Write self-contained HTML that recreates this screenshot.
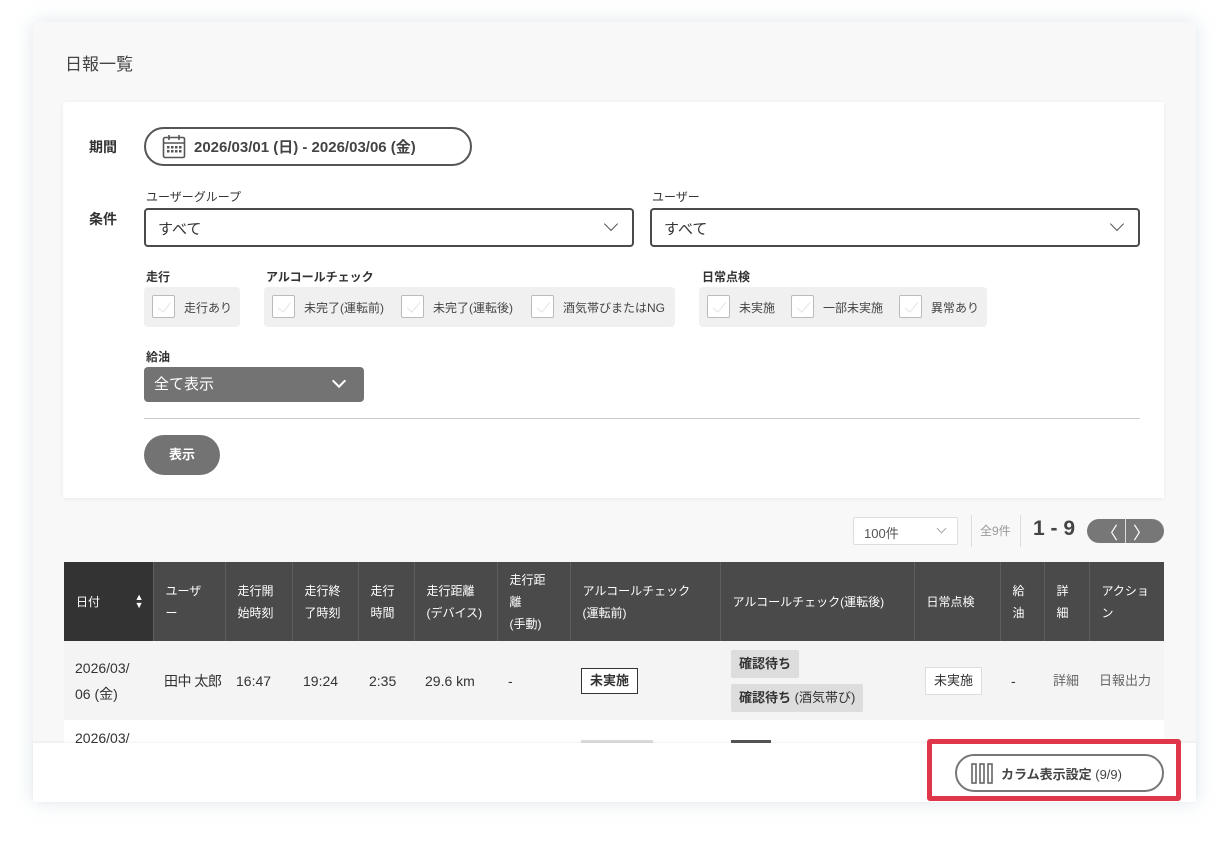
<!DOCTYPE html>
<html><head><meta charset="utf-8">
<style>
*{box-sizing:border-box;margin:0;padding:0}
body{width:1228px;height:844px;background:#fff;font-family:"Liberation Sans","Noto Sans CJK JP",sans-serif;color:#333;position:relative;overflow:hidden}
.a{position:absolute}
.card{left:33px;top:22px;width:1163px;height:780px;background:#f8f8f8;box-shadow:0 0 18px rgba(160,190,200,.35);overflow:hidden}
.panel{left:63px;top:102px;width:1101px;height:396px;background:#fff;box-shadow:0 1px 4px rgba(0,0,0,.06)}
.lbl{font-size:14px;font-weight:bold;color:#333}
.sm{font-size:12px;color:#333}
.sel{border:2px solid #4a4a4a;border-radius:4px;height:39px;background:#fff;font-size:15px;padding:8px 12px}
.chev{position:absolute;width:10px;height:10px;border-right:1.6px solid #555;border-bottom:1.6px solid #555;transform:rotate(45deg)}
.grp{background:#f0f0f0;border-radius:4px;height:40px}
.cb{position:absolute;width:23px;height:23px;border:1px solid #bbb;background:#fff;top:8px;border-radius:2px}
.cb::after{content:"";position:absolute;left:8px;top:3px;width:6px;height:12px;border-right:1px solid #e4e4e4;border-bottom:1px solid #e4e4e4;transform:rotate(40deg)}
.cbt{position:absolute;top:12px;font-size:12px;color:#444;white-space:nowrap}
th,td{font-weight:normal;text-align:left}
.tbl{left:64px;top:562px;width:1100px;border-collapse:collapse;table-layout:fixed}
.tbl th{background:#4a4a4a;color:#fff;font-size:12px;line-height:22px;height:79px;padding:0 12px;border-left:1px solid #5e5e5e;vertical-align:middle}
.tbl td{background:#f4f4f4;font-size:14px;height:79px;padding:0 11px;line-height:26px;color:#333;white-space:nowrap;overflow:visible}
.badge{display:inline-block;background:#ddd;font-size:13px;font-weight:bold;padding:0 8px;line-height:28px;border-radius:2px}
</style></head><body>
<div class="a card"></div>
<div class="a" style="left:65px;top:50px;font-size:17px;color:#444">日報一覧</div>
<div class="a panel"></div>
<div class="a lbl" style="left:89px;top:137px">期間</div>
<div class="a" style="left:144px;top:127px;width:328px;height:39px;border:2px solid #555;border-radius:20px;background:#fff"></div>
<svg class="a" style="left:162px;top:134px" width="24" height="25" viewBox="0 0 24 25"><rect x="1.5" y="3.5" width="21" height="20" rx="1.5" fill="none" stroke="#555" stroke-width="1.6"/><line x1="1.5" y1="9" x2="22.5" y2="9" stroke="#555" stroke-width="1.4"/><line x1="7" y1="1" x2="7" y2="6" stroke="#555" stroke-width="1.6"/><line x1="17" y1="1" x2="17" y2="6" stroke="#555" stroke-width="1.6"/><g fill="#555"><rect x="5" y="12" width="2.5" height="2.5"/><rect x="9" y="12" width="2.5" height="2.5"/><rect x="13" y="12" width="2.5" height="2.5"/><rect x="17" y="12" width="2.5" height="2.5"/><rect x="5" y="16" width="2.5" height="2.5"/><rect x="9" y="16" width="2.5" height="2.5"/><rect x="13" y="16" width="2.5" height="2.5"/><rect x="17" y="16" width="2.5" height="2.5"/></g></svg>
<div class="a" style="left:194px;top:136px;font-size:15px;font-weight:bold;color:#444">2026/03/01 (日) - 2026/03/06 (金)</div>
<div class="a lbl" style="left:89px;top:209px">条件</div>
<div class="a sm" style="left:146px;top:188px">ユーザーグループ</div>
<div class="a sel" style="left:144px;top:208px;width:490px">すべて<span class="chev" style="right:16px;top:9px"></span></div>
<div class="a sm" style="left:652px;top:188px">ユーザー</div>
<div class="a sel" style="left:650px;top:208px;width:490px">すべて<span class="chev" style="right:16px;top:9px"></span></div>

<div class="a sm" style="left:146px;top:268px;font-weight:bold">走行</div>
<div class="a grp" style="left:144px;top:287px;width:96px"><span class="cb" style="left:8px"></span><span class="cbt" style="left:40px">走行あり</span></div>
<div class="a sm" style="left:266px;top:268px;font-weight:bold">アルコールチェック</div>
<div class="a grp" style="left:264px;top:287px;width:411px"><span class="cb" style="left:8px"></span><span class="cbt" style="left:40px">未完了(運転前)</span><span class="cb" style="left:137px"></span><span class="cbt" style="left:169px">未完了(運転後)</span><span class="cb" style="left:267px"></span><span class="cbt" style="left:299px">酒気帯びまたはNG</span></div>
<div class="a sm" style="left:702px;top:268px;font-weight:bold">日常点検</div>
<div class="a grp" style="left:699px;top:287px;width:288px"><span class="cb" style="left:8px"></span><span class="cbt" style="left:40px">未実施</span><span class="cb" style="left:92px"></span><span class="cbt" style="left:124px">一部未実施</span><span class="cb" style="left:200px"></span><span class="cbt" style="left:232px">異常あり</span></div>

<div class="a sm" style="left:146px;top:348px;font-weight:bold">給油</div>
<div class="a" style="left:144px;top:367px;width:220px;height:35px;background:#737373;border-radius:4px;color:#fff;font-size:15px;padding:6px 10px">全て表示<span class="chev" style="right:20px;top:9px;border-color:#fff;border-width:2px"></span></div>
<div class="a" style="left:144px;top:418px;width:996px;height:1px;background:#ccc"></div>
<div class="a" style="left:144px;top:435px;width:76px;height:40px;background:#737373;border-radius:20px;color:#fff;font-size:13px;font-weight:bold;text-align:center;line-height:40px">表示</div>

<div class="a" style="left:853px;top:517px;width:105px;height:28px;background:#fff;border:1px solid #ddd;border-radius:2px;font-size:13px;color:#555;padding:5px 10px">100件<span class="chev" style="right:12px;top:7px;width:7px;height:7px;border-color:#aaa;border-width:1px"></span></div>
<div class="a" style="left:971px;top:515px;width:1px;height:32px;background:#ddd"></div>
<div class="a" style="left:980px;top:522px;font-size:12px;color:#999">全9件</div>
<div class="a" style="left:1020px;top:515px;width:1px;height:32px;background:#ddd"></div>
<div class="a" style="left:1033px;top:517px;font-size:21px;font-weight:bold;color:#444">1 - 9</div>
<div class="a" style="left:1087px;top:519px;width:77px;height:24px;background:#777;border-radius:12px"></div>
<div class="a" style="left:1125px;top:519px;width:1px;height:24px;background:#ddd"></div>
<div class="a" style="left:1101px;top:519px;color:#fff;font-size:17px">〈</div>
<div class="a" style="left:1133px;top:519px;color:#fff;font-size:17px">〉</div>

<table class="a tbl">
<colgroup><col style="width:89px"><col style="width:72px"><col style="width:67px"><col style="width:66px"><col style="width:56px"><col style="width:83px"><col style="width:73px"><col style="width:150px"><col style="width:194px"><col style="width:86px"><col style="width:44px"><col style="width:45px"><col style="width:75px"></colgroup>
<tr><th style="background:#333;border:0;position:relative">日付<span style="position:absolute;right:9px;top:31px;font-size:9px;line-height:8px">▲<br>▼</span></th><th>ユーザ<br>ー</th><th>走行開<br>始時刻</th><th>走行終<br>了時刻</th><th>走行<br>時間</th><th>走行距離<br>(デバイス)</th><th>走行距<br>離<br>(手動)</th><th>アルコールチェック<br>(運転前)</th><th>アルコールチェック(運転後)</th><th>日常点検</th><th>給<br>油</th><th>詳<br>細</th><th>アクショ<br>ン</th></tr>
<tr><td>2026/03/<br>06 (金)</td><td style="padding:0 0 0 11px;letter-spacing:-0.5px">田中 太郎</td><td>16:47</td><td>19:24</td><td>2:35</td><td>29.6 km</td><td>-</td><td><span style="display:inline-block;border:1px solid #333;font-size:13px;font-weight:bold;padding:0 8px;line-height:24px;background:#fff">未実施</span></td><td><span class="badge">確認待ち</span><br><span class="badge" style="margin-top:6px">確認待ち <span style="font-weight:normal">(酒気帯び)</span></span></td><td><span style="display:inline-block;border:1px solid #ddd;font-size:13px;padding:0 8px;line-height:26px;background:#fff">未実施</span></td><td>-</td><td style="color:#666;padding:0 6px 0 9px;font-size:13px">詳細</td><td style="color:#666;padding:0 0 0 10px;font-size:13px">日報出力</td></tr>
</table>
<div class="a" style="left:64px;top:720px;width:1100px;height:30px;background:#fff"></div>
<div class="a" style="left:75px;top:730px;font-size:14px;color:#333">2026/03/</div>
<div class="a" style="left:581px;top:740px;width:72px;height:8px;background:#ddd"></div>
<div class="a" style="left:731px;top:740px;width:40px;height:8px;background:#555"></div>
<div class="a" style="left:33px;top:743px;width:1163px;height:59px;background:#fff;box-shadow:0 -1px 3px rgba(0,0,0,.06)"></div>
<div class="a" style="left:927px;top:739px;width:254px;height:62px;border:5px solid #e0364a;border-radius:3px;background:#fff"></div>
<div class="a" style="left:955px;top:754px;width:209px;height:38px;border:2px solid #777;border-radius:19px;background:#fff"></div>
<svg class="a" style="left:971px;top:763px" width="22" height="21" viewBox="0 0 22 21"><g fill="none" stroke="#666" stroke-width="1.6"><rect x="1" y="1" width="4" height="19"/><rect x="9" y="1" width="4" height="19"/><rect x="17" y="1" width="4" height="19"/></g></svg>
<div class="a" style="left:1001px;top:764px;font-size:13px;color:#444"><b>カラム表示設定</b> (9/9)</div>
</body></html>
